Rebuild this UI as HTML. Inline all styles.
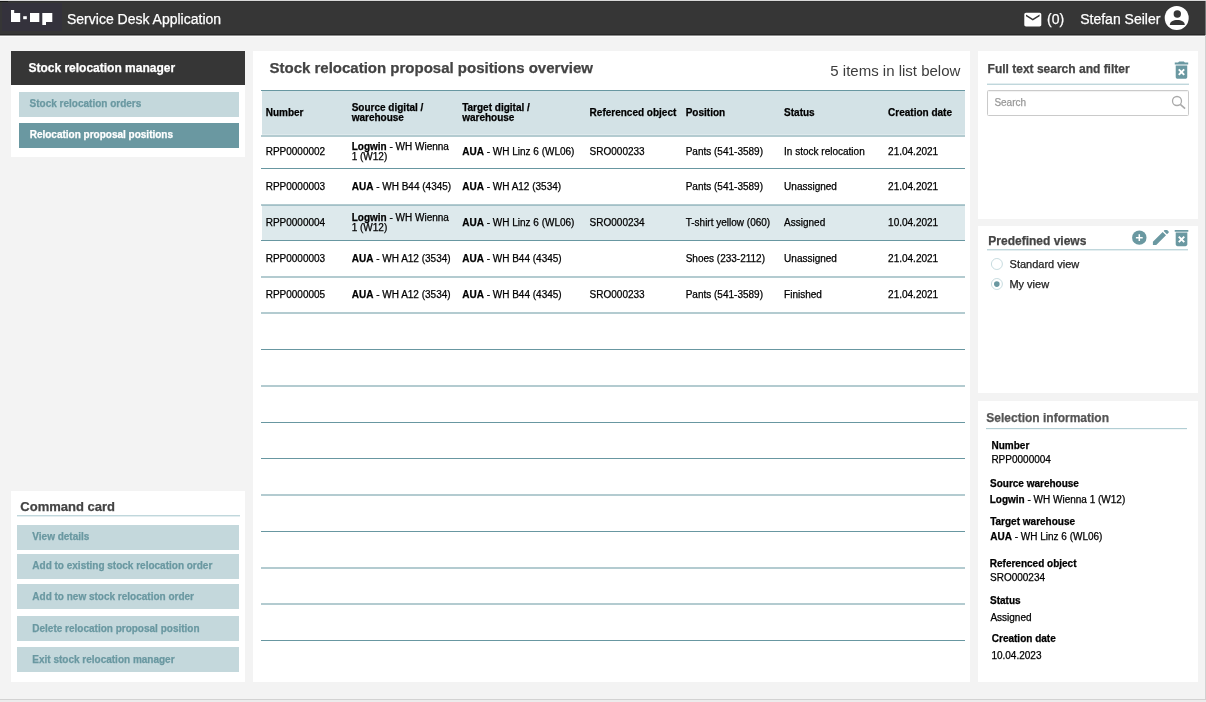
<!DOCTYPE html>
<html><head><meta charset="utf-8"><title>Service Desk Application</title>
<style>
html,body{margin:0;padding:0}
body{width:1206px;height:702px;position:relative;overflow:hidden;background:#f3f3f3;font-family:"Liberation Sans",Arial,Helvetica,sans-serif}
#w{position:absolute;left:0;top:0;width:1206px;height:702px;will-change:transform}
.t{position:absolute;line-height:20px;white-space:nowrap;-webkit-text-stroke:0.25px}
.b{position:absolute}
#ic{position:absolute;left:0;top:0}
</style></head><body><div id="w">
<div class="b" style="left:0px;top:0px;width:1206.00px;height:1.00px;background:#d9d9d9;"></div>
<div class="b" style="left:0px;top:1px;width:1205.00px;height:33.00px;background:#363636;"></div>
<div class="b" style="left:0px;top:34px;width:1205.00px;height:1.00px;background:#282828;"></div>
<div class="b" style="left:0px;top:35px;width:1205.00px;height:1.00px;background:#8c8c8c;"></div>
<div class="b" style="left:0px;top:36px;width:1205.00px;height:1.00px;background:#fcfcfc;"></div>
<div class="b" style="left:0px;top:1px;width:1205.00px;height:1.00px;background:#303030;"></div>
<div class="b" style="left:0px;top:1px;width:8.00px;height:1.00px;background:#151515;"></div>
<div class="b" style="left:2px;top:3px;width:60.00px;height:28.00px;background:#34323c;"></div>
<div class="t" style="left:67px;top:9.45px;font-size:14px;font-weight:normal;color:#fff;">Service Desk Application</div>
<div class="t" style="left:1047px;top:9.45px;font-size:14px;font-weight:normal;color:#fff;">(0)</div>
<div class="t" style="left:1080.2px;top:9.45px;font-size:14px;font-weight:normal;color:#fff;">Stefan Seiler</div>
<div class="b" style="left:1205px;top:1px;width:1.00px;height:34.00px;background:#777;"></div>
<div class="b" style="left:1205px;top:35px;width:1.00px;height:667.00px;background:#d2d2d2;"></div>
<div class="b" style="left:0px;top:699px;width:1206.00px;height:1.00px;background:#d2d2d2;"></div>
<div class="b" style="left:0px;top:700px;width:1206.00px;height:2.00px;background:#ececec;"></div>
<div class="b" style="left:11px;top:51px;width:234.00px;height:106.00px;background:#fff;"></div>
<div class="b" style="left:11px;top:51px;width:234.00px;height:34.00px;background:#363636;"></div>
<div class="t" style="left:28.4px;top:58.14px;font-size:12px;font-weight:bold;color:#fff;">Stock relocation manager</div>
<div class="b" style="left:19px;top:92px;width:220.00px;height:25.00px;background:#c4d8dc;"></div>
<div class="t" style="left:29.6px;top:93.83px;font-size:10px;font-weight:bold;color:#6a98a1;">Stock relocation orders</div>
<div class="b" style="left:19px;top:123px;width:220.00px;height:25.00px;background:#6a98a1;"></div>
<div class="t" style="left:29.7px;top:124.84px;font-size:10px;font-weight:bold;color:#fff;">Relocation proposal positions</div>
<div class="b" style="left:11px;top:491px;width:234.00px;height:191.00px;background:#fff;"></div>
<div class="t" style="left:20.3px;top:496.80px;font-size:13px;font-weight:bold;color:#444;">Command card</div>
<div class="b" style="left:17px;top:515px;width:223.00px;height:1.00px;background:rgba(165,198,205,0.70);"></div>
<div class="b" style="left:17px;top:516px;width:223.00px;height:1.00px;background:rgba(165,198,205,0.30);"></div>
<div class="b" style="left:17px;top:525px;width:222.00px;height:25.00px;background:#c4d8dc;"></div>
<div class="t" style="left:32.3px;top:526.83px;font-size:10px;font-weight:bold;color:#6a98a1;">View details</div>
<div class="b" style="left:17px;top:554px;width:222.00px;height:25.00px;background:#c4d8dc;"></div>
<div class="t" style="left:32.3px;top:555.83px;font-size:10px;font-weight:bold;color:#6a98a1;">Add to existing stock relocation order</div>
<div class="b" style="left:17px;top:584px;width:222.00px;height:25.00px;background:#c4d8dc;"></div>
<div class="t" style="left:32.3px;top:586.83px;font-size:10px;font-weight:bold;color:#6a98a1;">Add to new stock relocation order</div>
<div class="b" style="left:17px;top:616px;width:222.00px;height:25.00px;background:#c4d8dc;"></div>
<div class="t" style="left:32.3px;top:618.83px;font-size:10px;font-weight:bold;color:#6a98a1;">Delete relocation proposal position</div>
<div class="b" style="left:17px;top:647px;width:222.00px;height:25.00px;background:#c4d8dc;"></div>
<div class="t" style="left:32.3px;top:649.83px;font-size:10px;font-weight:bold;color:#6a98a1;">Exit stock relocation manager</div>
<div class="b" style="left:253px;top:51px;width:717.00px;height:631.00px;background:#fff;"></div>
<div class="t" style="left:269.5px;top:58.10px;font-size:15px;font-weight:bold;color:#444;">Stock relocation proposal positions overview</div>
<div class="t" style="left:830.3px;top:61.10px;font-size:15px;font-weight:normal;color:#3c3c3c;-webkit-text-stroke:0">5 items in list below</div>
<div class="b" style="left:262px;top:91px;width:703.00px;height:44.00px;background:#d3e2e6;"></div>
<div class="b" style="left:262px;top:134px;width:703.00px;height:1.00px;background:rgba(255,255,255,.25);"></div>
<div class="b" style="left:262px;top:205px;width:703.00px;height:35.00px;background:#dde9ec;"></div>
<div class="b" style="left:261px;top:90px;width:704.00px;height:1.00px;background:rgba(104,151,161,1.00);"></div>
<div class="b" style="left:261px;top:135px;width:704.00px;height:1.00px;background:rgba(104,151,161,0.50);"></div>
<div class="b" style="left:261px;top:136px;width:704.00px;height:1.00px;background:rgba(104,151,161,0.50);"></div>
<div class="b" style="left:261px;top:168px;width:704.00px;height:1.00px;background:rgba(104,151,161,1.00);"></div>
<div class="b" style="left:261px;top:204px;width:704.00px;height:1.00px;background:rgba(104,151,161,0.50);"></div>
<div class="b" style="left:261px;top:205px;width:704.00px;height:1.00px;background:rgba(104,151,161,0.50);"></div>
<div class="b" style="left:261px;top:240px;width:704.00px;height:1.00px;background:rgba(104,151,161,1.00);"></div>
<div class="b" style="left:261px;top:276px;width:704.00px;height:1.00px;background:rgba(104,151,161,0.50);"></div>
<div class="b" style="left:261px;top:277px;width:704.00px;height:1.00px;background:rgba(104,151,161,0.50);"></div>
<div class="b" style="left:261px;top:312px;width:704.00px;height:1.00px;background:rgba(104,151,161,0.50);"></div>
<div class="b" style="left:261px;top:313px;width:704.00px;height:1.00px;background:rgba(104,151,161,0.50);"></div>
<div class="b" style="left:261px;top:349px;width:704.00px;height:1.00px;background:rgba(104,151,161,1.00);"></div>
<div class="b" style="left:261px;top:385px;width:704.00px;height:1.00px;background:rgba(104,151,161,0.50);"></div>
<div class="b" style="left:261px;top:386px;width:704.00px;height:1.00px;background:rgba(104,151,161,0.50);"></div>
<div class="b" style="left:261px;top:422px;width:704.00px;height:1.00px;background:rgba(104,151,161,1.00);"></div>
<div class="b" style="left:261px;top:458px;width:704.00px;height:1.00px;background:rgba(104,151,161,1.00);"></div>
<div class="b" style="left:261px;top:494px;width:704.00px;height:1.00px;background:rgba(104,151,161,0.50);"></div>
<div class="b" style="left:261px;top:495px;width:704.00px;height:1.00px;background:rgba(104,151,161,0.50);"></div>
<div class="b" style="left:261px;top:531px;width:704.00px;height:1.00px;background:rgba(104,151,161,1.00);"></div>
<div class="b" style="left:261px;top:567px;width:704.00px;height:1.00px;background:rgba(104,151,161,0.50);"></div>
<div class="b" style="left:261px;top:568px;width:704.00px;height:1.00px;background:rgba(104,151,161,0.50);"></div>
<div class="b" style="left:261px;top:603px;width:704.00px;height:1.00px;background:rgba(104,151,161,0.50);"></div>
<div class="b" style="left:261px;top:604px;width:704.00px;height:1.00px;background:rgba(104,151,161,0.50);"></div>
<div class="b" style="left:261px;top:640px;width:704.00px;height:1.00px;background:rgba(104,151,161,1.00);"></div>
<div class="t" style="left:265.7px;top:102.83px;font-size:10px;font-weight:bold;color:#000;">Number</div>
<div class="t" style="left:351.7px;top:97.83px;font-size:10px;font-weight:bold;color:#000;">Source digital /</div>
<div class="t" style="left:351.7px;top:107.83px;font-size:10px;font-weight:bold;color:#000;">warehouse</div>
<div class="t" style="left:462.2px;top:97.83px;font-size:10px;font-weight:bold;color:#000;">Target digital /</div>
<div class="t" style="left:462.2px;top:107.83px;font-size:10px;font-weight:bold;color:#000;">warehouse</div>
<div class="t" style="left:589.6px;top:102.83px;font-size:10px;font-weight:bold;color:#000;">Referenced object</div>
<div class="t" style="left:685.7px;top:102.83px;font-size:10px;font-weight:bold;color:#000;">Position</div>
<div class="t" style="left:784.1px;top:102.83px;font-size:10px;font-weight:bold;color:#000;">Status</div>
<div class="t" style="left:888.1px;top:102.83px;font-size:10px;font-weight:bold;color:#000;">Creation date</div>
<div class="t" style="left:265.7px;top:141.84px;font-size:10px;font-weight:normal;color:#000;">RPP0000002</div>
<div class="t" style="left:351.7px;top:136.84px;font-size:10px;font-weight:normal;color:#000;"><b>Logwin</b> - WH Wienna</div>
<div class="t" style="left:351.7px;top:146.84px;font-size:10px;font-weight:normal;color:#000;">1 (W12)</div>
<div class="t" style="left:462.2px;top:141.84px;font-size:10px;font-weight:normal;color:#000;"><b>AUA</b> - WH Linz 6 (WL06)</div>
<div class="t" style="left:589.6px;top:141.84px;font-size:10px;font-weight:normal;color:#000;">SRO000233</div>
<div class="t" style="left:685.7px;top:141.84px;font-size:10px;font-weight:normal;color:#000;">Pants (541-3589)</div>
<div class="t" style="left:784.1px;top:141.84px;font-size:10px;font-weight:normal;color:#000;">In stock relocation</div>
<div class="t" style="left:888.1px;top:141.84px;font-size:10px;font-weight:normal;color:#000;">21.04.2021</div>
<div class="t" style="left:265.7px;top:176.84px;font-size:10px;font-weight:normal;color:#000;">RPP0000003</div>
<div class="t" style="left:351.7px;top:176.84px;font-size:10px;font-weight:normal;color:#000;"><b>AUA</b> - WH B44 (4345)</div>
<div class="t" style="left:462.2px;top:176.84px;font-size:10px;font-weight:normal;color:#000;"><b>AUA</b> - WH A12 (3534)</div>
<div class="t" style="left:685.7px;top:176.84px;font-size:10px;font-weight:normal;color:#000;">Pants (541-3589)</div>
<div class="t" style="left:784.1px;top:176.84px;font-size:10px;font-weight:normal;color:#000;">Unassigned</div>
<div class="t" style="left:888.1px;top:176.84px;font-size:10px;font-weight:normal;color:#000;">21.04.2021</div>
<div class="t" style="left:265.7px;top:212.84px;font-size:10px;font-weight:normal;color:#000;">RPP0000004</div>
<div class="t" style="left:351.7px;top:207.84px;font-size:10px;font-weight:normal;color:#000;"><b>Logwin</b> - WH Wienna</div>
<div class="t" style="left:351.7px;top:217.84px;font-size:10px;font-weight:normal;color:#000;">1 (W12)</div>
<div class="t" style="left:462.2px;top:212.84px;font-size:10px;font-weight:normal;color:#000;"><b>AUA</b> - WH Linz 6 (WL06)</div>
<div class="t" style="left:589.6px;top:212.84px;font-size:10px;font-weight:normal;color:#000;">SRO000234</div>
<div class="t" style="left:685.7px;top:212.84px;font-size:10px;font-weight:normal;color:#000;">T-shirt yellow (060)</div>
<div class="t" style="left:784.1px;top:212.84px;font-size:10px;font-weight:normal;color:#000;">Assigned</div>
<div class="t" style="left:888.1px;top:212.84px;font-size:10px;font-weight:normal;color:#000;">10.04.2021</div>
<div class="t" style="left:265.7px;top:248.84px;font-size:10px;font-weight:normal;color:#000;">RPP0000003</div>
<div class="t" style="left:351.7px;top:248.84px;font-size:10px;font-weight:normal;color:#000;"><b>AUA</b> - WH A12 (3534)</div>
<div class="t" style="left:462.2px;top:248.84px;font-size:10px;font-weight:normal;color:#000;"><b>AUA</b> - WH B44 (4345)</div>
<div class="t" style="left:685.7px;top:248.84px;font-size:10px;font-weight:normal;color:#000;">Shoes (233-2112)</div>
<div class="t" style="left:784.1px;top:248.84px;font-size:10px;font-weight:normal;color:#000;">Unassigned</div>
<div class="t" style="left:888.1px;top:248.84px;font-size:10px;font-weight:normal;color:#000;">21.04.2021</div>
<div class="t" style="left:265.7px;top:284.84px;font-size:10px;font-weight:normal;color:#000;">RPP0000005</div>
<div class="t" style="left:351.7px;top:284.84px;font-size:10px;font-weight:normal;color:#000;"><b>AUA</b> - WH A12 (3534)</div>
<div class="t" style="left:462.2px;top:284.84px;font-size:10px;font-weight:normal;color:#000;"><b>AUA</b> - WH B44 (4345)</div>
<div class="t" style="left:589.6px;top:284.84px;font-size:10px;font-weight:normal;color:#000;">SRO000233</div>
<div class="t" style="left:685.7px;top:284.84px;font-size:10px;font-weight:normal;color:#000;">Pants (541-3589)</div>
<div class="t" style="left:784.1px;top:284.84px;font-size:10px;font-weight:normal;color:#000;">Finished</div>
<div class="t" style="left:888.1px;top:284.84px;font-size:10px;font-weight:normal;color:#000;">21.04.2021</div>
<div class="b" style="left:978px;top:51px;width:220.00px;height:168.00px;background:#fff;"></div>
<div class="t" style="left:987.6px;top:59.14px;font-size:12px;font-weight:bold;color:#444;">Full text search and filter</div>
<div class="b" style="left:987px;top:83px;width:201.50px;height:1.00px;background:rgba(165,198,205,0.30);"></div>
<div class="b" style="left:987px;top:84px;width:201.50px;height:1.00px;background:rgba(165,198,205,0.70);"></div>
<div class="b" style="left:987px;top:90px;width:202.00px;height:26.00px;background:#fff;border:1px solid #cacaca;border-radius:1.5px;box-sizing:border-box;box-shadow:inset 0 1px 1px rgba(0,0,0,.06)"></div>
<div class="t" style="left:994.4px;top:92.83px;font-size:10px;font-weight:normal;color:#999;">Search</div>
<div class="b" style="left:978px;top:226px;width:220.00px;height:167.00px;background:#fff;"></div>
<div class="t" style="left:988.3px;top:231.14px;font-size:12px;font-weight:bold;color:#444;">Predefined views</div>
<div class="b" style="left:987px;top:249px;width:201.30px;height:1.00px;background:rgba(165,198,205,0.70);"></div>
<div class="b" style="left:987px;top:250px;width:201.30px;height:1.00px;background:rgba(165,198,205,0.30);"></div>
<div class="t" style="left:1009.6px;top:254.49px;font-size:11px;font-weight:normal;color:#222;">Standard view</div>
<div class="t" style="left:1009.4px;top:274.49px;font-size:11px;font-weight:normal;color:#222;">My view</div>
<div class="b" style="left:978px;top:401px;width:220.00px;height:281.00px;background:#fff;"></div>
<div class="t" style="left:986.3px;top:408.14px;font-size:12px;font-weight:bold;color:#555;">Selection information</div>
<div class="b" style="left:986px;top:428px;width:201.30px;height:1.00px;background:rgba(165,198,205,0.85);"></div>
<div class="b" style="left:986px;top:429px;width:201.30px;height:1.00px;background:rgba(165,198,205,0.15);"></div>
<div class="t" style="left:991.5px;top:435.84px;font-size:10px;font-weight:bold;color:#000;">Number</div>
<div class="t" style="left:991.4px;top:449.84px;font-size:10px;font-weight:normal;color:#000;">RPP0000004</div>
<div class="t" style="left:990.0px;top:473.84px;font-size:10px;font-weight:bold;color:#000;">Source warehouse</div>
<div class="t" style="left:989.7px;top:489.84px;font-size:10px;font-weight:normal;color:#000;"><b>Logwin</b> - WH Wienna 1 (W12)</div>
<div class="t" style="left:990.2px;top:511.83px;font-size:10px;font-weight:bold;color:#000;">Target warehouse</div>
<div class="t" style="left:990.2px;top:526.83px;font-size:10px;font-weight:normal;color:#000;"><b>AUA</b> - WH Linz 6 (WL06)</div>
<div class="t" style="left:989.8px;top:553.83px;font-size:10px;font-weight:bold;color:#000;">Referenced object</div>
<div class="t" style="left:990.0px;top:567.83px;font-size:10px;font-weight:normal;color:#000;">SRO000234</div>
<div class="t" style="left:990.0px;top:590.83px;font-size:10px;font-weight:bold;color:#000;">Status</div>
<div class="t" style="left:990.4px;top:607.83px;font-size:10px;font-weight:normal;color:#000;">Assigned</div>
<div class="t" style="left:991.8px;top:628.83px;font-size:10px;font-weight:bold;color:#000;">Creation date</div>
<div class="t" style="left:991.4px;top:645.83px;font-size:10px;font-weight:normal;color:#000;">10.04.2023</div>
<svg id="ic" width="1206" height="702" viewBox="0 0 1206 702"><g fill="#fff"><path d="M11 10h3.2v3H20.2v9H11z"/><rect x="23.2" y="16.2" width="3.6" height="3"/><rect x="30" y="13" width="9.3" height="9"/><path d="M42.3 13h10v9H46v3h-3.7z"/></g>
<path transform="translate(1022.6 9.4) scale(.85)" fill="#fff" d="M20 4H4c-1.1 0-1.99.9-1.99 2L2 18c0 1.1.9 2 2 2h16c1.1 0 2-.9 2-2V6c0-1.1-.9-2-2-2zm0 4l-8 5-8-5V6l8 5 8-5v2z"/>
<g transform="translate(1164.7 6.1)"><circle cx="12" cy="12" r="12" fill="#fff"/><circle cx="12.6" cy="7.9" r="3.7" fill="#363636"/><path fill="#363636" d="M5.1 18.9c0-3.4 3.4-5.1 7.5-5.1s7.5 1.7 7.5 5.1z"/></g>
<g fill="none" stroke="#aaa"><circle cx="1177" cy="101" r="4.5" stroke-width="1.3"/><path d="M1180.3 104.3L1185.1 108.7" stroke-width="1.6"/></g>
<path transform="translate(1169.96 58.67) scale(.96)" fill="#6a98a1" d="M6 19c0 1.1.9 2 2 2h8c1.1 0 2-.9 2-2V7H6v12zm2.46-7.12l1.41-1.41L12 12.59l2.12-2.12 1.41 1.41L13.41 14l2.12 2.12-1.41 1.41L12 15.41l-2.12 2.12-1.41-1.41L10.59 14l-2.13-2.12zM15.5 4l-1-1h-5l-1 1H5v2h14V4z"/>
<clipPath id="c230"><rect x="1120" y="230" width="80" height="30"/></clipPath>
<g clip-path="url(#c230)"><circle cx="1139.3" cy="237.65" r="7.2" fill="#6a98a1"/><path d="M1135.9 237.65h6.8M1139.3 234.25v6.8" stroke="#fff" stroke-width="1.5" fill="none"/><path transform="translate(1150.25 226.41) scale(.885)" fill="#6a98a1" d="M3 17.25V21h3.75L17.81 9.94l-3.75-3.75L3 17.25zM20.71 7.04c.39-.39.39-1.02 0-1.41l-2.34-2.34c-.39-.39-1.02-.39-1.41 0l-1.83 1.83 3.75 3.75 1.83-1.83z"/><path transform="translate(1169.88 225.83) scale(.97)" fill="#6a98a1" d="M6 19c0 1.1.9 2 2 2h8c1.1 0 2-.9 2-2V7H6v12zm2.46-7.12l1.41-1.41L12 12.59l2.12-2.12 1.41 1.41L13.41 14l2.12 2.12-1.41 1.41L12 15.41l-2.12 2.12-1.41-1.41L10.59 14l-2.13-2.12zM15.5 4l-1-1h-5l-1 1H5v2h14V4z"/></g>
<circle cx="996.9" cy="264" r="5.5" fill="#fff" stroke="#bad3d8" stroke-width="0.8"/>
<circle cx="996.9" cy="284" r="5.5" fill="#fff" stroke="#bad3d8" stroke-width="0.8"/>
<circle cx="996.8" cy="284.1" r="2.8" fill="#6a98a1"/></svg>
</div></body></html>
